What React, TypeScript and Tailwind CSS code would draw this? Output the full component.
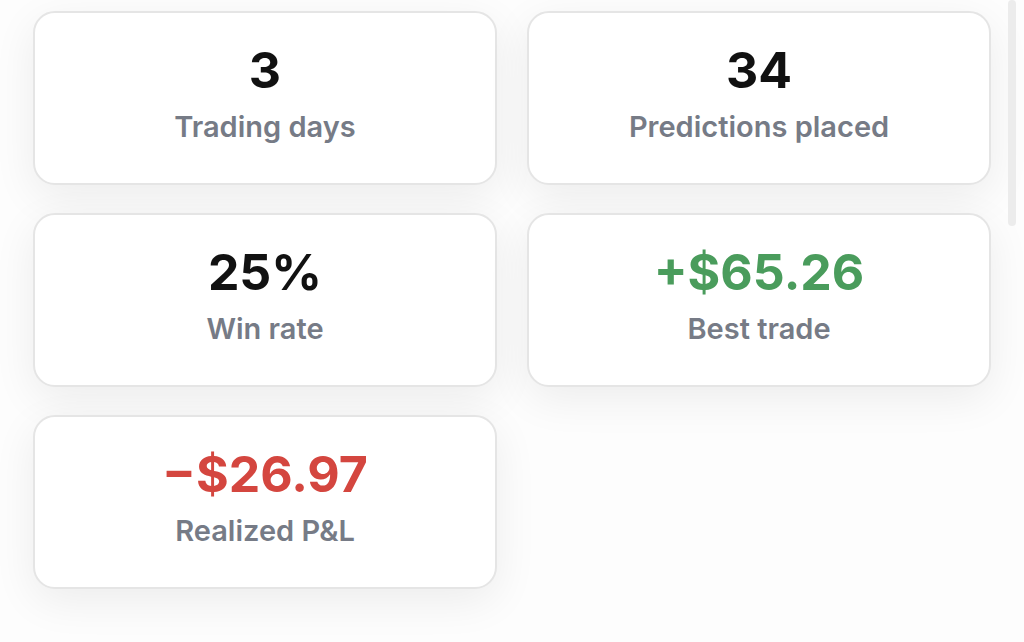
import React from "react";

type Stat = { value: string; label: string; tone?: "up" | "down" };

const stats: Stat[] = [
  { value: "3", label: "Trading days" },
  { value: "34", label: "Predictions placed" },
  { value: "25%", label: "Win rate" },
  { value: "+$65.26", label: "Best trade", tone: "up" },
  { value: "\u2212$26.97", label: "Realized P&L", tone: "down" },
];

function StatCard({ stat }: { stat: Stat }) {
  const valueColor =
    stat.tone === "up"
      ? "text-[#4a9c5c]"
      : stat.tone === "down"
      ? "text-[#d4463f]"
      : "text-[#111111]";
  return (
    <div className="h-[174px] rounded-[22px] border-2 border-[#e5e5e5] bg-white shadow-[0_12px_44px_rgba(0,0,0,0.07)] flex flex-col items-center pt-[32px]">
      <div className={`text-[50px] leading-none font-bold ${valueColor}`}>
        {stat.value}
      </div>
      <div className="mt-[17px] text-[29px] leading-none font-semibold text-[#767b86]">
        {stat.label}
      </div>
    </div>
  );
}

export default function App() {
  return (
    <div
      className="relative w-[1024px] h-[642px] overflow-hidden bg-[#fdfdfd]"
      style={{ fontFamily: "Inter, 'Noto Sans', sans-serif" }}
    >
      <div className="grid grid-cols-2 gap-x-[30px] gap-y-[28px] pl-[33px] pr-[33px] pt-[11px]">
        {stats.map((s) => (
          <StatCard key={s.label} stat={s} />
        ))}
      </div>
      {/* scroll indicator */}
      <div className="absolute right-[8px] top-0 h-[226px] w-[8px] rounded-full bg-[#ececec]" />
    </div>
  );
}
